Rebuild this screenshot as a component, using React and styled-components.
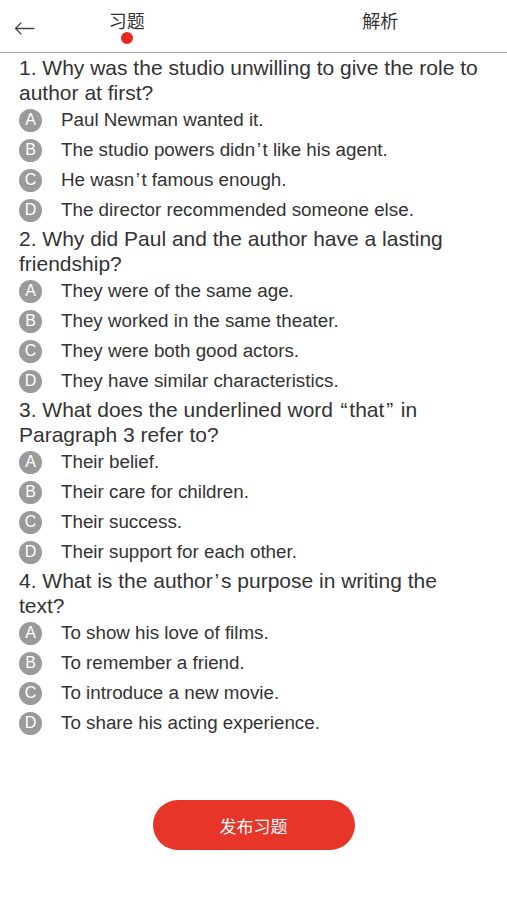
import styled, { createGlobalStyle } from 'styled-components';

const GlobalStyle = createGlobalStyle`
  body {
    margin: 0;
    background: #fff;
    font-family: 'Liberation Sans', 'Noto Sans CJK SC', sans-serif;
    color: #333;
  }
`;

const QUESTIONS = [
  {
    title: '1. Why was the studio unwilling to give the role to author at first?',
    options: [
      'Paul Newman wanted it.',
      'The studio powers didn\u2019t like his agent.',
      'He wasn\u2019t famous enough.',
      'The director recommended someone else.',
    ],
  },
  {
    title: '2. Why did Paul and the author have a lasting friendship?',
    options: [
      'They were of the same age.',
      'They worked in the same theater.',
      'They were both good actors.',
      'They have similar characteristics.',
    ],
  },
  {
    title: '3. What does the underlined word \u201cthat\u201d in Paragraph 3 refer to?',
    options: [
      'Their belief.',
      'Their care for children.',
      'Their success.',
      'Their support for each other.',
    ],
  },
  {
    title: '4. What is the author\u2019s purpose in writing the text?',
    options: [
      'To show his love of films.',
      'To remember a friend.',
      'To introduce a new movie.',
      'To share his acting experience.',
    ],
  },
];

const LETTERS = ['A', 'B', 'C', 'D'];

// curly quotes get a hair space on each side, as on the device
const spaced = (text) => text.replace(/([\u2018\u2019\u201c\u201d])/g, '\u200a$1\u200a');

const App = () => {
  return (
    <>
      <GlobalStyle />
      <Page>
        <Header>
          <BackButton aria-label='back'>
            <svg width='21' height='13' viewBox='0 0 21 13' fill='none'>
              <path
                d='M20 6.5H1.5M7 1L1.5 6.5L7 12'
                stroke='#444'
                strokeWidth='1.3'
                strokeLinecap='round'
                strokeLinejoin='round'
              />
            </svg>
          </BackButton>
          <Tab>
            习题
            <Dot />
          </Tab>
          <Tab>解析</Tab>
        </Header>
        <List>
          {QUESTIONS.map((q) => (
            <Question key={q.title}>
              <Title>{spaced(q.title)}</Title>
              {q.options.map((opt, i) => (
                <Option key={opt}>
                  <Badge>{LETTERS[i]}</Badge>
                  <OptionText>{spaced(opt)}</OptionText>
                </Option>
              ))}
            </Question>
          ))}
        </List>
        <Footer>
          <PublishButton>发布习题</PublishButton>
        </Footer>
      </Page>
    </>
  );
};

const Page = styled.div`
  width: 507px;
  height: 900px;
  display: flex;
  flex-direction: column;
  background: #fff;
`;

const Header = styled.div`
  position: relative;
  height: 52px;
  display: flex;
  border-bottom: 1px solid #a8a8a8;
`;

const BackButton = styled.button`
  position: absolute;
  left: 14px;
  top: 22px;
  padding: 0;
  border: none;
  background: none;
  display: flex;
`;

const Tab = styled.div`
  flex: 1;
  display: flex;
  flex-direction: column;
  align-items: center;
  padding-top: 9px;
  font-size: 18px;
  line-height: 22px;
  color: #333;
  font-family: 'Noto Sans CJK SC', sans-serif;
`;

const Dot = styled.span`
  width: 12px;
  height: 12px;
  border-radius: 50%;
  background: #e8281e;
  margin-top: 1px;
`;

const List = styled.div`
  display: flex;
  flex-direction: column;
  padding: 2px 26px 0 19px;
`;

const Question = styled.div`
  display: flex;
  flex-direction: column;
  padding-bottom: 1px;
`;

const Title = styled.div`
  font-size: 21px;
  line-height: 25px;
  color: #333;
`;

const Option = styled.div`
  display: flex;
  align-items: center;
  height: 30px;
`;

const Badge = styled.span`
  width: 23px;
  height: 23px;
  border-radius: 50%;
  background: #9a9a9a;
  color: #fff;
  font-size: 16px;
  display: flex;
  align-items: center;
  justify-content: center;
  flex-shrink: 0;
`;

const OptionText = styled.span`
  margin-left: 19px;
  font-size: 18.8px;
  line-height: 22px;
  color: #333;
`;

const Footer = styled.div`
  flex: 1;
  display: flex;
  justify-content: center;
  align-items: flex-end;
  padding-bottom: 50px;
`;

const PublishButton = styled.button`
  width: 202px;
  height: 50px;
  border: none;
  border-radius: 25px;
  background: #e8352a;
  color: #fff;
  font-size: 17px;
  font-family: 'Noto Sans CJK SC', sans-serif;
`;

export default App;
